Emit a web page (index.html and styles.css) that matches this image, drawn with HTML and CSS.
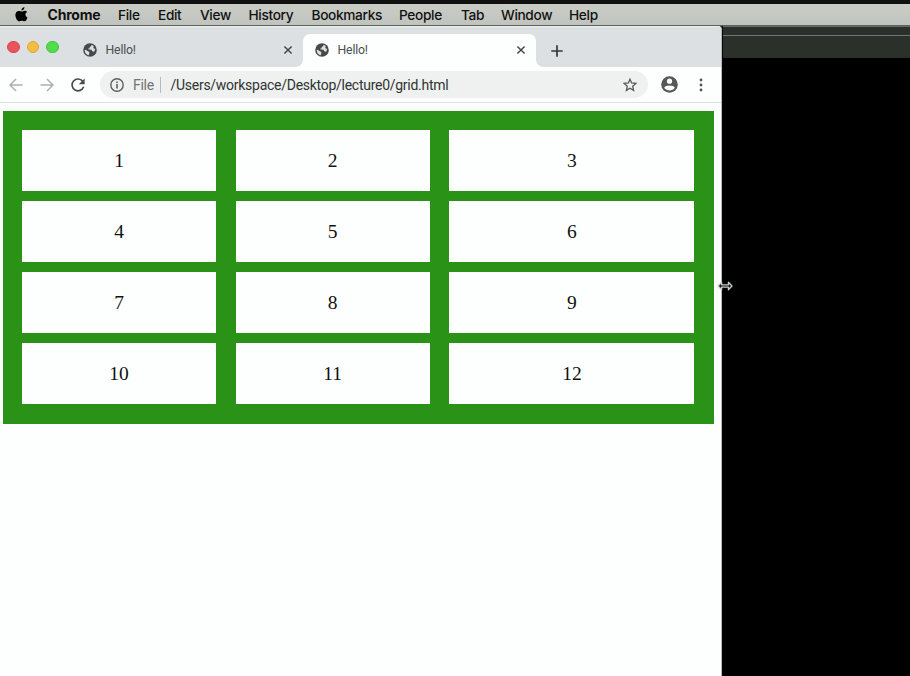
FILE: index.html
```html
<!DOCTYPE html>
<html lang="en">
<head>
<meta charset="utf-8">
<title>Hello!</title>
<link rel="stylesheet" href="styles.css">
</head>
<body>
<svg class="defs" aria-hidden="true">
  <symbol id="globe" viewBox="0 0 14 14">
    <circle cx="7" cy="7" r="6.8" fill="#454949"/>
    <path d="M1.8 6.5 5 8.2 6.4 9.3 5.8 12.3C3.2 11.8 1.5 9.2 1.8 6.5ZM8.5 1.7 8.2 3.2 6.7 4.1 6.6 5.3 4.7 5.9 6.2 6.6 8.6 6.7 9.2 8.2 11.1 8.7C11.7 7.8 12.1 7 12 5.8L10.2 5.2 10.7 2.9Z" fill="#dfe2e3"/>
  </symbol>
  <symbol id="close" viewBox="0 0 10 10"><path d="M1.4 1.4 8.6 8.6M8.6 1.4 1.4 8.6" fill="none" stroke="#404444" stroke-width="1.4"/></symbol>
</svg>
<div class="screen">
  <nav class="menubar">
    <svg class="apple" viewBox="0 0 14 16"><path d="M10.2 0C10.3 1.9 8.8 3.7 6.9 3.7 6.8 1.9 8.4.2 10.2 0ZM13 5.3C10.4 6.8 10.8 10 13.5 11.1 12.8 13 11.6 15.3 10.2 15.4 9.1 15.4 8.7 14.7 7.4 14.7 6 14.7 5.6 15.4 4.6 15.4 2.5 15.4.4 11.5.4 8.6.4 5.8 2.2 4.1 4.2 4.1 5.5 4.1 6.3 4.9 7.3 4.9 8.3 4.9 9.2 4 10.7 4 11.6 4 12.5 4.5 13 5.3Z"/></svg>
    <span class="app">Chrome</span><span class="m-file">File</span><span class="m-edit">Edit</span><span class="m-view">View</span><span class="m-history">History</span><span class="m-bookmarks">Bookmarks</span><span class="m-people">People</span><span class="m-tab">Tab</span><span class="m-window">Window</span><span>Help</span>
  </nav>
  <div class="desktop">
    <main class="window">
      <header class="tabstrip">
        <div class="lights"><i class="red"></i><i class="yellow"></i><i class="green"></i></div>
        <div class="tab"><svg class="favicon"><use href="#globe"/></svg><span>Hello!</span><svg class="close"><use href="#close"/></svg></div>
        <div class="tab active"><svg class="favicon"><use href="#globe"/></svg><span>Hello!</span><svg class="close"><use href="#close"/></svg></div>
        <svg class="plus" viewBox="0 0 12 12"><path d="M6 .3V11.7M.3 6H11.7" stroke="#343838" stroke-width="1.7"/></svg>
      </header>
      <div class="toolbar">
        <svg class="back" viewBox="0 0 14 14"><path d="M13.5 7H1.2M7 1 1 7 7 13" fill="none" stroke="#adb0af" stroke-width="1.5"/></svg>
        <svg class="forward" viewBox="0 0 14 14"><path d="M.5 7H12.8M7 1 13 7 7 13" fill="none" stroke="#adb0af" stroke-width="1.5"/></svg>
        <svg class="reload" viewBox="0 0 14 14"><path d="M11.7 3.3A5.9 5.9 0 1 0 12.6 8.8" fill="none" stroke="#484c4b" stroke-width="1.7"/><path d="M13.6.4V6.2H7.8Z" fill="#484c4b"/></svg>
        <div class="address">
          <svg class="info" viewBox="0 0 14 14"><circle cx="7" cy="7" r="6.2" fill="none" stroke="#5b5f5e" stroke-width="1.4"/><path d="M7 6V10.6M7 3.4V5" stroke="#5b5f5e" stroke-width="1.6"/></svg>
          <span class="scheme">File</span><span class="url">/Users/workspace/Desktop/lecture0/grid.html</span>
          <svg class="star" viewBox="0 0 14 14"><path d="M7 1.2 8.6 5 12.9 5.4 9.7 8.2 10.6 12.4 7 10.2 3.4 12.4 4.3 8.2 1.1 5.4 5.4 5Z" fill="none" stroke="#555958" stroke-width="1.3"/></svg>
        </div>
        <svg class="profile" viewBox="0 0 17 17"><circle cx="8.5" cy="8.5" r="8.3" fill="#545857"/><circle cx="8.5" cy="5.2" r="2.6" fill="#fcfffd"/><path d="M3.2 11.7C4.3 8.8 12.7 8.8 13.8 11.7 11.2 15.3 5.8 15.3 3.2 11.7Z" fill="#fcfffd"/></svg>
        <svg class="more" viewBox="0 0 4 14"><circle cx="2" cy="2" r="1.4"/><circle cx="2" cy="7" r="1.4"/><circle cx="2" cy="12" r="1.4"/></svg>
      </div>
      <section class="page">
        <div class="grid">
          <div>1</div><div>2</div><div>3</div><div>4</div><div>5</div><div>6</div><div>7</div><div>8</div><div>9</div><div>10</div><div>11</div><div>12</div>
        </div>
      </section>
    </main>
    <aside class="behind"><div class="behind-top"></div><div class="behind-bar"></div></aside>
  </div>
  <svg class="cursor" viewBox="0 0 16 12"><path d="M1 6 4.6 2.2V4.8H11.4V2.2L15 6 11.4 9.8V7.2H4.6V9.8Z" fill="#111" stroke="#c9cccb" stroke-width="1.3" stroke-linejoin="round"/></svg>
</div>
</body>
</html>
```
FILE: styles.css
```css
* { box-sizing: border-box; }
body { margin: 0; background: #000; overflow: hidden; }
svg { display: block; flex: none; }
.defs { position: absolute; width: 0; height: 0; }
.screen {
  position: relative;
  width: 910px;
  height: 676px;
  border-top: 4px solid #111;
  display: flex;
  flex-direction: column;
  font-family: Inter, "Liberation Sans", sans-serif;
}
.menubar {
  height: 22px;
  flex: none;
  display: flex;
  align-items: center;
  padding-left: 15px;
  background: linear-gradient(#caccc6, #c1c4be);
  border-bottom: 1px solid #5e625f;
  color: #111;
  font-size: 13.7px;
  font-weight: 500;
  letter-spacing: -0.35px;
  white-space: nowrap;
}
.apple { width: 13px; height: 15px; margin: -1px 19.5px 0 0; }
.menubar span { flex: none; }
.menubar .app { width: 70.5px; font-weight: 700; font-size: 14px; letter-spacing: -0.2px; }
.m-file { width: 40px; }
.m-edit { width: 42px; }
.m-view { width: 48.5px; }
.m-history { width: 63px; }
.m-bookmarks { width: 87.5px; }
.m-people { width: 62px; }
.m-tab { width: 40px; }
.m-window { width: 68px; }
.desktop { flex: 1; display: flex; min-height: 0; background: #2c302b; }
.window {
  width: 722px;
  flex: none;
  display: flex;
  flex-direction: column;
  background: #fcfffd;
  border-right: 1px solid #b5b8b6;
  border-radius: 0 4px 0 0;
  overflow: hidden;
}
.tabstrip {
  height: 41px;
  flex: none;
  display: flex;
  align-items: flex-end;
  background: #dde0e2;
  border-top: 1px solid #eceeee;
}
.lights { display: flex; gap: 7px; width: 71px; padding-left: 7px; margin-bottom: 14px; }
.lights i { width: 12.5px; height: 12.5px; border-radius: 50%; flex: none; }
.red { background: #e9545a; border: 1px solid #d74950; }
.yellow { background: #f1bd43; border: 1px solid #dda938; }
.green { background: #50dc4b; border: 1px solid #43c63f; }
.tab {
  width: 232px;
  height: 33px;
  display: flex;
  align-items: center;
  padding: 0 10px 1px 12px;
  color: #4b4f50;
  font: 12.3px Roboto, sans-serif;
  letter-spacing: -0.2px;
}
.tab.active { position: relative; width: 233px; background: #fcfffd; border-radius: 7px 7px 0 0; padding-right: 10.5px; }
.tab.active::before, .tab.active::after {
  content: "";
  position: absolute;
  bottom: 0;
  width: 7px;
  height: 7px;
}
.tab.active::before { left: -7px; background: radial-gradient(circle at 0 0, transparent 6.5px, #fcfffd 7px); }
.tab.active::after { right: -7px; background: radial-gradient(circle at 100% 0, transparent 6.5px, #fcfffd 7px); }
.favicon { width: 14px; height: 14px; margin-right: 8.5px; }
.close { width: 10px; height: 10px; margin-left: auto; }
.plus { width: 12px; height: 12px; margin: 0 0 10.5px 15px; }
.toolbar {
  height: 36px;
  flex: none;
  display: flex;
  align-items: center;
  padding-left: 9px;
  border-bottom: 1px solid #dce0e0;
}
.back { width: 14px; height: 14px; margin-right: 17px; }
.forward { width: 14px; height: 14px; margin-right: 17px; }
.reload { width: 14px; height: 14px; margin-right: 15px; }
.address {
  width: 548px;
  height: 27px;
  display: flex;
  align-items: center;
  padding: 0 11px 0 10px;
  border-radius: 14px;
  background: #eef1ef;
  font: 14px Roboto, sans-serif;
  letter-spacing: -0.27px;
}
.info { width: 14px; height: 14px; margin-right: 9px; }
.scheme { width: 28px; height: 16px; line-height: 16px; border-right: 1px solid #b8bbba; color: #707473; }
.url { margin-left: 9.5px; color: #303433; }
.star { width: 14px; height: 14px; margin-left: auto; }
.profile { width: 17px; height: 17px; margin-left: 13px; }
.more { width: 4px; height: 14px; margin-left: 21px; fill: #515554; }
.page { flex: 1; padding: 8px 7px 0 3px; }
.grid {
  display: grid;
  grid-template-columns: 194px 194px 245px;
  grid-template-rows: repeat(4, 61px);
  gap: 10px 19.7px;
  width: 711px;
  height: 312.5px;
  padding: 19px;
  background: #2b9218;
}
.grid div {
  display: flex;
  align-items: center;
  justify-content: center;
  background: #fcfffd;
  color: #111;
  font: 19.5px "Liberation Serif", serif;
}
.behind { flex: 1; display: flex; flex-direction: column; background: #000; border-left: 1px solid #050605; }
.behind-top { height: 10px; background: #2b302d; border-top: 1px solid #656a66; border-bottom: 1px solid #707571; }
.behind-bar { height: 22px; background: #2c302b; }
.cursor { position: absolute; left: 717px; top: 276px; width: 16px; height: 12px; }
```
